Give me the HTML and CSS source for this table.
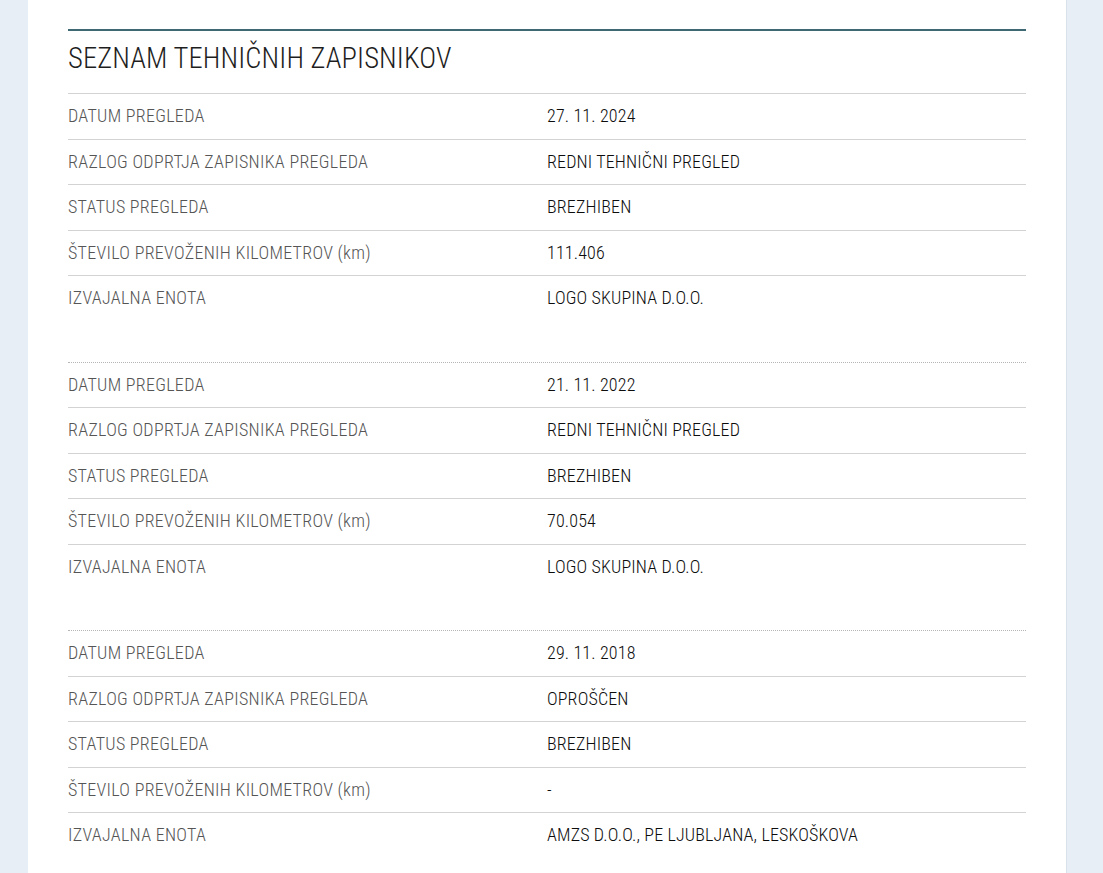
FILE: index.html
```html
<!DOCTYPE html>
<html lang="sl">
<head>
<meta charset="utf-8">
<title>Seznam tehničnih zapisnikov</title>
<link rel="stylesheet" href="styles.css">
</head>
<body>
<main class="card">
  <section class="panel">
    <h2 class="panel-title">SEZNAM TEHNIČNIH ZAPISNIKOV</h2>

    <dl class="record">
      <div class="row"><dt>DATUM PREGLEDA</dt><dd>27. 11. 2024</dd></div>
      <div class="row"><dt>RAZLOG ODPRTJA ZAPISNIKA PREGLEDA</dt><dd>REDNI TEHNIČNI PREGLED</dd></div>
      <div class="row"><dt>STATUS PREGLEDA</dt><dd>BREZHIBEN</dd></div>
      <div class="row"><dt>ŠTEVILO PREVOŽENIH KILOMETROV (km)</dt><dd>111.406</dd></div>
      <div class="row"><dt>IZVAJALNA ENOTA</dt><dd>LOGO SKUPINA D.O.O.</dd></div>
    </dl>

    <dl class="record">
      <div class="row"><dt>DATUM PREGLEDA</dt><dd>21. 11. 2022</dd></div>
      <div class="row"><dt>RAZLOG ODPRTJA ZAPISNIKA PREGLEDA</dt><dd>REDNI TEHNIČNI PREGLED</dd></div>
      <div class="row"><dt>STATUS PREGLEDA</dt><dd>BREZHIBEN</dd></div>
      <div class="row"><dt>ŠTEVILO PREVOŽENIH KILOMETROV (km)</dt><dd>70.054</dd></div>
      <div class="row"><dt>IZVAJALNA ENOTA</dt><dd>LOGO SKUPINA D.O.O.</dd></div>
    </dl>

    <dl class="record">
      <div class="row"><dt>DATUM PREGLEDA</dt><dd>29. 11. 2018</dd></div>
      <div class="row"><dt>RAZLOG ODPRTJA ZAPISNIKA PREGLEDA</dt><dd>OPROŠČEN</dd></div>
      <div class="row"><dt>STATUS PREGLEDA</dt><dd>BREZHIBEN</dd></div>
      <div class="row"><dt>ŠTEVILO PREVOŽENIH KILOMETROV (km)</dt><dd>-</dd></div>
      <div class="row"><dt>IZVAJALNA ENOTA</dt><dd>AMZS D.O.O., PE LJUBLJANA, LESKOŠKOVA</dd></div>
    </dl>
  </section>
</main>
</body>
</html>
```
FILE: styles.css
```css
html, body {
  margin: 0;
  padding: 0;
  background: #e7eef5;
}

body {
  font-family: "Roboto Condensed", Roboto, "Liberation Sans", sans-serif;
  font-stretch: condensed;
  -webkit-font-smoothing: antialiased;
}

.card {
  margin-left: 28px;
  width: 1039px;
  box-sizing: border-box;
  background: #ffffff;
  border-right: 1px solid #d9e2ea;
  padding: 29px 40px 60px;
}

.panel {
  border-top: 2px solid #3e6873;
}

.panel-title {
  margin: 0;
  padding: 11px 0 19px;
  font-size: 28.6px;
  line-height: 32px;
  font-weight: 350;
  color: #1e1e1e;
  letter-spacing: 0.1px;
}

.record {
  margin: 0 0 41px;
  border-top: 1px dotted #b5b5b5;
}

.record:first-of-type {
  border-top: 1px solid #d3d3d3;
}

.row {
  display: grid;
  grid-template-columns: 1fr 1fr;
  padding: 11px 0 11.5px;
  border-bottom: 1px solid #d3d3d3;
  font-size: 18px;
  line-height: 22px;
  font-weight: 350;
}

.row:last-child {
  border-bottom: 0;
}

.row dt {
  margin: 0;
  color: #555555;
  letter-spacing: 0.3px;
}

.row dd {
  margin: 0;
  color: #0d0d0d;
  letter-spacing: 0.15px;
}
```
